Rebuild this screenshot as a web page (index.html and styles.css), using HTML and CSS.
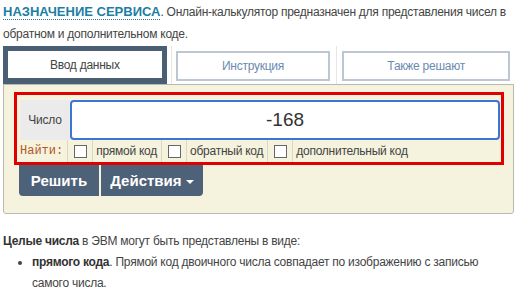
FILE: index.html
```html
<!DOCTYPE html>
<html lang="ru">
<head>
  <meta charset="UTF-8" />
  <title>Прямой, обратный и дополнительный код</title>
  <link rel="stylesheet" href="styles.css">
</head>
<body>

  <p class="intro">
    <span class="intro-title">НАЗНАЧЕНИЕ СЕРВИСА</span>. Онлайн-калькулятор предназначен для представления чисел в обратном и дополнительном коде.
  </p>

  <div class="tabs">
    <div class="tab-cell"><div class="tab active">Ввод данных</div></div>
    <div class="tab-cell"><div class="tab">Инструкция</div></div>
    <div class="tab-cell last"><div class="tab">Также решают</div></div>
  </div>

  <div class="panel">
    <div class="calc">
      <div class="calc-row">
        <div class="calc-label">Число</div>
        <input class="calc-input" type="text" value="-168">
      </div>
      <div class="find-row">
        <span class="find-label">Найти:</span>
        <span class="find-box"><span class="check"></span></span>
        <span class="find-text">прямой код</span>
        <span class="find-box"><span class="check"></span></span>
        <span class="find-text">обратный код</span>
        <span class="find-box"><span class="check"></span></span>
        <span class="find-text last">дополнительный код</span>
      </div>
    </div>
    <div class="actions">
      <button class="btn btn-left">Решить</button>
      <button class="btn btn-right">Действия <span class="caret"></span></button>
    </div>
  </div>

  <div class="article">
    <p><b>Целые числа</b> в ЭВМ могут быть представлены в виде:</p>
    <ul>
      <li><b>прямого кода</b>. Прямой код двоичного числа совпадает по изображению с записью самого числа.</li>
    </ul>
  </div>

</body>
</html>
```

FILE: styles.css
```css
body {
  margin: 0;
  font-family: 'Liberation Sans', Arial, sans-serif;
  font-size: 12px;
  letter-spacing: -0.25px;
  color: #444;
  background: #fff;
  width: 516px;
}

.intro {
  margin: 0;
  padding: 1px 3px 0;
  line-height: 22px;
}

.intro-title {
  font-weight: bold;
  font-size: 13px;
  letter-spacing: 0;
  color: #1d7ea3;
  border-bottom: 1px dotted #1d7ea3;
}

.tabs {
  display: flex;
  margin: 1px 2px 0 3px;
  height: 38px;
}

.tab-cell {
  display: flex;
  border-right: 1px solid #e6e6e6;
}

.tab-cell:nth-child(1) { width: 168px; }
.tab-cell:nth-child(2) { width: 166px; padding: 5px 6px 3px 4px; box-sizing: border-box; }
.tab-cell:nth-child(3) { width: 177px; padding: 5px 4px 3px 5px; box-sizing: border-box; border-right: none; }

.tab {
  flex: 1;
  display: flex;
  align-items: center;
  justify-content: center;
  border: 2px solid #bcc7d3;
  background: #fff;
  color: #6a8bb0;
  font-size: 12px;
}

.tab.active {
  border: 5px solid #4b5f74;
  border-bottom-width: 6px;
  margin-right: 4px;
  color: #444;
}

.panel {
  margin: 0 2px 0 3px;
  background: #f5f2dd;
  border: 1px solid #b9b9b0;
  border-radius: 0 0 3px 3px;
  padding: 7px 9px 15px 10px;
  height: 106px;
}

.calc {
  border: 3px solid #e00000;
  padding: 5px 1px 0 3px;
}

.calc-row {
  display: flex;
  height: 40px;
}

.calc-label {
  width: 50px;
  background: #ebebeb;
  display: flex;
  align-items: center;
  justify-content: center;
  font-size: 12px;
  color: #444;
}

.calc-input {
  flex: 1;
  border: 2px solid #3b76d0;
  border-radius: 4px;
  font-family: 'Liberation Sans', Arial, sans-serif;
  font-size: 19px;
  color: #333;
  text-align: center;
  padding: 0;
  margin: 0;
  outline: none;
}

.find-row {
  display: flex;
  align-items: center;
  height: 22px;
  font-size: 12px;
  color: #444;
}

.find-row > span {
  height: 100%;
  display: flex;
  align-items: center;
  border-right: 1px solid #ddd8c2;
}

.find-label {
  font-family: 'Liberation Mono', 'Courier New', monospace;
  color: #b0582a;
  font-size: 12px;
  letter-spacing: 0;
  padding-right: 4px;
}

.find-box {
  padding: 0 5px 0 6px;
}

.check {
  width: 11px;
  height: 11px;
  border: 1px solid #666;
  background: #fff;
  display: block;
}

.find-text {
  padding: 0 4px 0 3px;
}

.find-row > .last {
  border-right: none;
}

.actions {
  display: flex;
  gap: 2px;
  margin-left: 5px;
}

.btn {
  height: 31px;
  border: none;
  background: #4d6178;
  color: #fff;
  font-family: 'Liberation Sans', Arial, sans-serif;
  font-size: 15px;
  font-weight: bold;
  padding: 0;
}

.btn-left {
  width: 80px;
  border-radius: 0 0 0 4px;
}

.btn-right {
  width: 102px;
  border-radius: 0 0 4px 0;
}

.caret {
  display: inline-block;
  width: 0;
  height: 0;
  border-left: 4px solid transparent;
  border-right: 4px solid transparent;
  border-top: 4px solid #fff;
  vertical-align: middle;
}

.article {
  padding: 17px 3px 0;
  line-height: 21px;
}

.article p {
  margin: 0;
}

.article b {
  color: #333;
}

.article ul {
  margin: 0;
  padding-left: 29px;
}
```
